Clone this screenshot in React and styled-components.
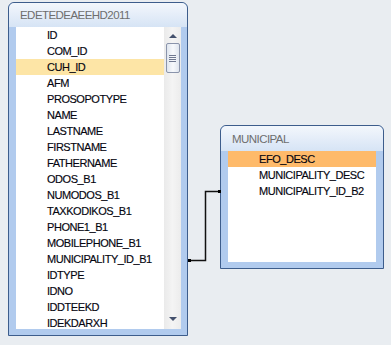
import React from "react";
import styled, { createGlobalStyle } from "styled-components";

const Global = createGlobalStyle`
  html, body { margin: 0; padding: 0; background: #e9edf1; }
  body { font-family: "Liberation Sans", Arial, sans-serif; }
`;

const Canvas = styled.div`
  position: relative;
  width: 391px;
  height: 345px;
  overflow: hidden;
  background: #e9edf1;
`;

const Frame = styled.div`
  position: absolute;
  left: ${(p) => p.$x}px;
  top: ${(p) => p.$y}px;
  width: ${(p) => p.$w}px;
  height: ${(p) => p.$h}px;
  box-sizing: border-box;
  border: 1px solid #3d5d8c;
  border-radius: 6px 6px 0 0;
  background: #b1cbee;
  display: flex;
  flex-direction: column;
  overflow: hidden;
`;

const TitleBar = styled.div`
  height: ${(p) => p.$h}px;
  flex: none;
  display: flex;
  align-items: center;
  padding-left: 11px;
  background: linear-gradient(#f3f7fc 0%, #e6eef9 45%, #d6e4f5 100%);
  color: #6e6e6e;
  font-size: 11.5px;
  letter-spacing: -0.55px;
  border-top-left-radius: 5px;
  border-top-right-radius: 5px;
`;

const Body = styled.div`
  flex: 1;
  display: flex;
  padding: 0 ${(p) => p.$right}px 6px 7px;
  min-height: 0;
`;

const List = styled.div`
  width: 148px;
  flex: none;
  background: #ffffff;
  overflow: hidden;
`;

const Row = styled.div`
  height: 16px;
  line-height: 16px;
  padding-left: 31px;
  font-size: 11px;
  letter-spacing: -0.45px;
  color: #05050f;
  -webkit-text-stroke: 0.15px #05050f;
  white-space: nowrap;
  background: ${(p) => (p.$hl ? p.$hl : "transparent")};
`;

const Scroll = styled.div`
  width: 17px;
  flex: none;
  background: linear-gradient(90deg, #eaeaea, #f4f4f4 50%, #ececec);
  display: flex;
  flex-direction: column;
  align-items: center;
  position: relative;
`;

const Arrow = styled.div`
  width: 0;
  height: 0;
  border-left: 4px solid transparent;
  border-right: 4px solid transparent;
  ${(p) =>
    p.$down
      ? "border-top: 4px solid #44516d; margin-top: auto; margin-bottom: 8px;"
      : "border-bottom: 4px solid #44516d; margin-top: 7px;"}
`;

const Thumb = styled.div`
  margin-top: 5px;
  width: 14px;
  height: 30px;
  box-sizing: border-box;
  border: 1px solid #8a94ab;
  border-radius: 2px;
  background: linear-gradient(90deg, #dfe5ee, #f7f9fc 50%, #dfe5ee);
  display: flex;
  flex-direction: column;
  align-items: center;
  justify-content: center;
  gap: 1px;
`;

const Grip = styled.div`
  width: 7px;
  height: 1px;
  background: #6f7890;
`;

const Connector = styled.svg`
  position: absolute;
  left: 0;
  top: 0;
  pointer-events: none;
`;

const leftFields = [
  "ID",
  "COM_ID",
  "CUH_ID",
  "AFM",
  "PROSOPOTYPE",
  "NAME",
  "LASTNAME",
  "FIRSTNAME",
  "FATHERNAME",
  "ODOS_B1",
  "NUMODOS_B1",
  "TAXKODIKOS_B1",
  "PHONE1_B1",
  "MOBILEPHONE_B1",
  "MUNICIPALITY_ID_B1",
  "IDTYPE",
  "IDNO",
  "IDDTEEKD",
  "IDEKDARXH",
];

const rightFields = ["EFO_DESC", "MUNICIPALITY_DESC", "MUNICIPALITY_ID_B2"];

export default function App() {
  return (
    <Canvas>
      <Global />
      <Frame $x={8} $y={2} $w={180} $h={334}>
        <TitleBar $h={24}>EDETEDEAEEHD2011</TitleBar>
        <Body $right={6}>
          <List>
            {leftFields.map((f) => (
              <Row key={f} $hl={f === "CUH_ID" ? "#fde5a6" : null}>
                {f}
              </Row>
            ))}
          </List>
          <Scroll>
            <Arrow />
            <Thumb>
              <Grip />
              <Grip />
              <Grip />
              <Grip />
            </Thumb>
            <Arrow $down />
          </Scroll>
        </Body>
      </Frame>
      <Frame $x={220} $y={125} $w={164} $h={144}>
        <TitleBar $h={25}>MUNICIPAL</TitleBar>
        <Body $right={7}>
          <List>
            {rightFields.map((f) => (
              <Row key={f} $hl={f === "EFO_DESC" ? "#feba6a" : null}>
                {f}
              </Row>
            ))}
          </List>
        </Body>
      </Frame>
      <Connector width="391" height="345">
        <path d="M190 260.5 H205.5 V191.5 H219" fill="none" stroke="#111" strokeWidth="1.5" />
        <rect x="188" y="259" width="3" height="3" fill="#000" />
        <rect x="218" y="190" width="3" height="3" fill="#000" />
      </Connector>
    </Canvas>
  );
}
